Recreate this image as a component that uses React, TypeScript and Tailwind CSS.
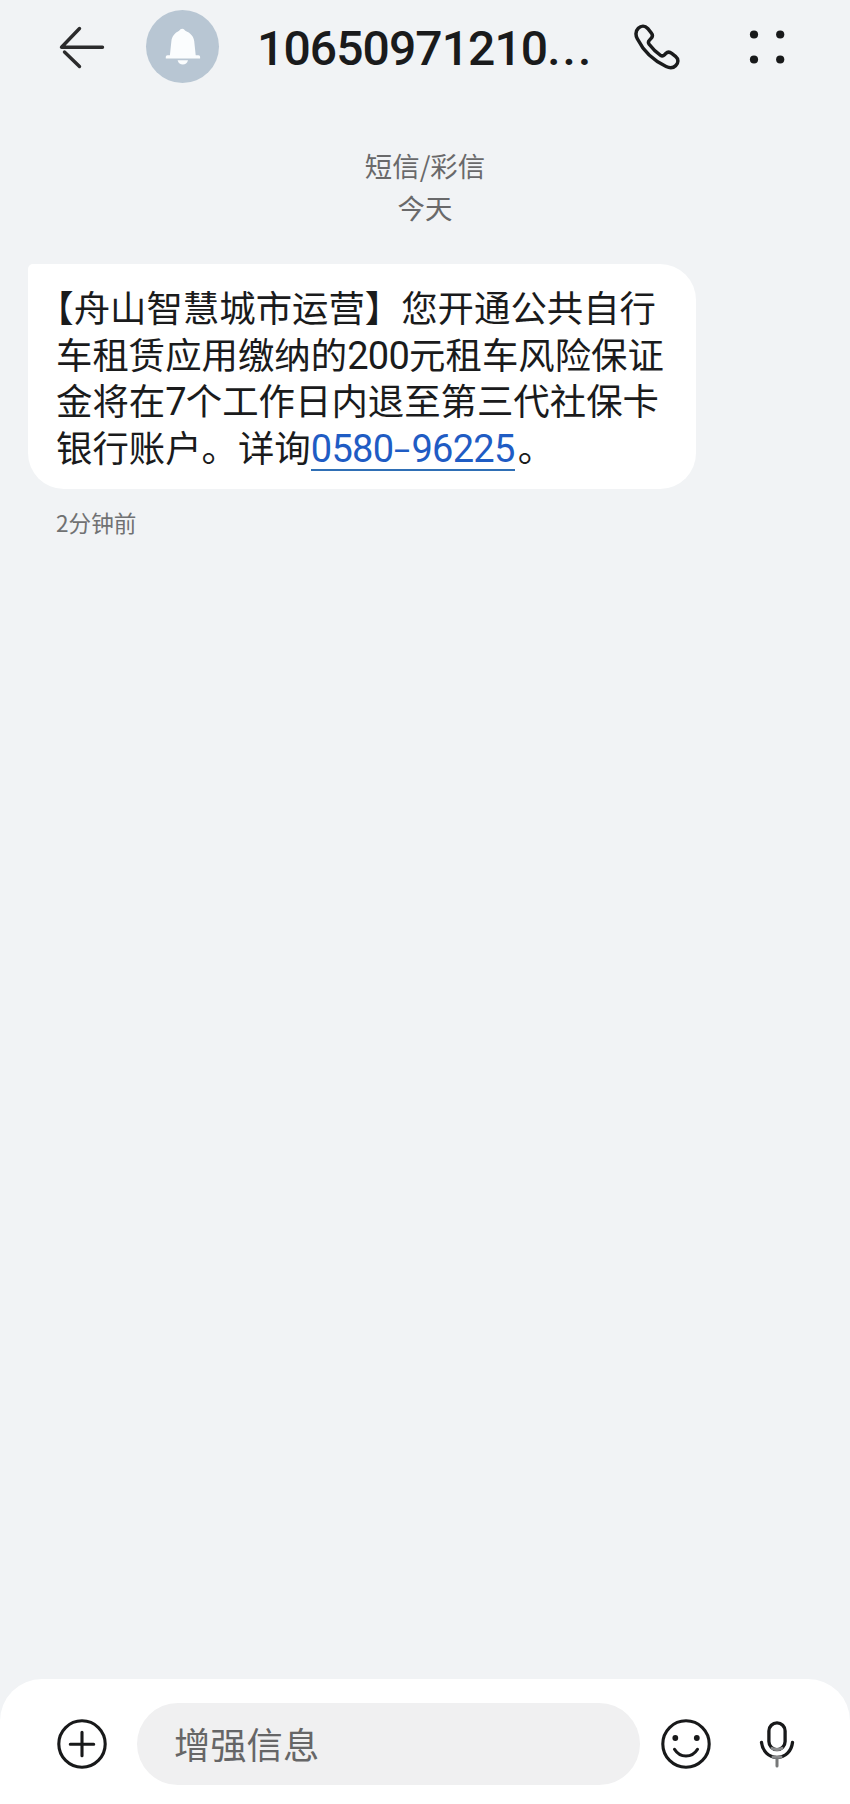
import type { ReactNode } from "react";

function BackIcon() {
  return (
    <svg className="h-11 w-12" viewBox="0 0 48 44" fill="none" stroke="#2b2b2c" strokeWidth="3.4" strokeLinecap="round">
      <path d="M21.500 3.500 3.500 22.200H44.500" strokeLinejoin="round" />
      <path d="M6.500 27 21.500 41.500" />
    </svg>
  );
}

function BellIcon() {
  return (
    <svg className="h-[38px] w-9" viewBox="0 0 36 38" fill="#fbfdfe">
      <path d="M17.200 0.800c1.400 0 2.100 1 3.100 1.900 5.200 2.200 8.300 5.500 8.900 10.300l1.500 14.200h2.700c1.400 0 1.900 .9 1.700 3.400H.8c-.2-2.500.3-3.400 1.700-3.400h2.400l1.500-14.200C7 8.200 9.800 4.900 14.100 2.700c1-.9 1.700-1.900 3.100-1.900Z" />
      <path d="M12.600 32.300h10.400c-.8 2.900-2.700 4.200-5.200 4.200s-4.400-1.300-5.200-4.200Z" />
    </svg>
  );
}

function PhoneIcon() {
  return (
    <svg className="size-[48px]" viewBox="0 0 50 50" fill="none" stroke="#1a1b1c" strokeWidth="3.600" strokeLinejoin="round">
      <path d="M5.500 5.500C8.500 2.400 12.500 2.600 15.300 5.700L19 10.200C21 12.700 20.600 14.500 18.500 16.500L17.400 17.600C15.800 19.200 15.500 20.400 16.800 22.100C20.500 27 24 30.400 28.700 33.700C30.400 34.800 31.500 34.400 32.900 33L34.100 31.800C36 29.900 38 29.800 40.300 31.600L44.300 34.800C47.600 37.500 47.600 41.500 44.500 44.400C42.100 46.700 38.500 47.200 34.500 45.300C20.500 38.900 11 29.500 4.500 16.500C2.400 12.200 2.700 8.300 5.500 5.500Z" />
    </svg>
  );
}

function MoreIcon() {
  return (
    <svg className="h-[34px] w-9" viewBox="0 0 36 34" fill="#18191a">
      <circle cx="5" cy="4.500" r="4.100" />
      <circle cx="31.200" cy="4.500" r="4.100" />
      <circle cx="5" cy="29.500" r="4.100" />
      <circle cx="31.200" cy="29.500" r="4.100" />
    </svg>
  );
}

function PlusIcon() {
  return (
    <svg className="size-[50px]" viewBox="0 0 50 50" fill="none" stroke="#18191a" strokeWidth="3.100" strokeLinecap="round">
      <circle cx="25" cy="25" r="23.200" />
      <path d="M25 13.300v23.400M13.300 25.200h23.400" />
    </svg>
  );
}

function SmileIcon() {
  return (
    <svg className="size-[50px]" viewBox="0 0 50 50" fill="none" stroke="#18191a" strokeWidth="3.100" strokeLinecap="round">
      <circle cx="25" cy="25" r="23.200" />
      <path d="M13.500 30.300c5.500 9 17.500 9 23 0" />
      <circle cx="14.300" cy="19" r="2.900" fill="#18191a" stroke="none" />
      <circle cx="35.800" cy="19" r="2.900" fill="#18191a" stroke="none" />
    </svg>
  );
}

function MicIcon() {
  return (
    <svg className="h-12 w-9" viewBox="0 0 36 48" fill="none" stroke="#18191a" strokeWidth="3.300" strokeLinecap="round">
      <path d="M9.900 21.500V11a8.100 8.100 0 0 1 16.200 0v10.500a8.100 8.100 0 0 1-16.200 0Z" />
      <path d="M2.500 22.500C3.500 31 9.500 37.300 18 37.300S32.500 31 33.500 22.500" />
      <path d="M13 28.200Q18 31 23 28.200M14 37Q18 37.800 22 37" stroke="#8a8b8c" strokeWidth="3" />
      <path d="M18 39v7" stroke="#777879" strokeWidth="3" />
    </svg>
  );
}

function Digits({ children }: { children: ReactNode }) {
  return <span className="font-[Roboto,sans-serif] text-[38px] tracking-[-0.7px]">{children}</span>;
}

export default function App() {
  return (
    <div className="flex h-[1804px] w-[850px] flex-col overflow-hidden bg-[#f1f3f5] font-['Noto_Sans_CJK_SC',sans-serif] text-[#1a1b1c]">
      <header className="flex h-[94px] shrink-0 items-center pl-[58px]">
        <BackIcon />
        <div className="mb-px ml-10 flex size-[73px] items-center justify-center rounded-full bg-[#b8c6d3]">
          <BellIcon />
        </div>
        <h1 className="mt-[3px] ml-[38px] w-[376px] whitespace-nowrap font-[Roboto,sans-serif] text-[48px] leading-[60px] font-medium tracking-[-0.9px]">
          10650971210<span className="tracking-[2px]">...</span>
        </h1>
        <PhoneIcon />
        <div className="mb-px ml-[68px]">
          <MoreIcon />
        </div>
      </header>

      <main className="flex flex-1 flex-col">
        <div className="mt-[50px] flex flex-col items-center text-[27.4px] leading-[42px] text-[#69696a]">
          <p>短信/彩信</p>
          <p>今天</p>
        </div>

        <div className="mt-9 ml-7 h-[225px] w-[668px] rounded-[36px] rounded-tl-[5px] bg-white pt-[19px] pl-7 text-[36.4px] whitespace-nowrap">
          <p className="-ml-[18.7px] h-[46.7px] leading-[46.7px]">【舟山智慧城市运营】您开通公共自行</p>
          <p className="h-[46.7px] leading-[46.7px]">车租赁应用缴纳的<Digits>200</Digits>元租车风险保证</p>
          <p className="h-[46.7px] leading-[46.7px]">金将在<Digits>7</Digits>个工作日内退至第三代社保卡</p>
          <p className="flex h-[46.7px] leading-[46.7px]">
            <span>银行账户。详询</span>
            <a className="flex h-12 border-b-2 border-[#2f6fb5] pt-[3px] text-[#1f5cc4]">
              <Digits>0580</Digits>
              <span className="-mt-1 inline-block w-[18px] origin-center scale-x-150 text-center">-</span>
              <Digits>96225</Digits>
            </a>
            <span className="ml-[3px]">。</span>
          </p>
        </div>
        <p className="mt-[18px] ml-14 text-[22.6px] leading-8 text-[#707172]">2分钟前</p>
      </main>

      <footer className="flex h-[125px] shrink-0 items-start rounded-t-[42px] bg-white pt-6 pl-[57px]">
        <div className="flex h-[82px] items-center">
          <PlusIcon />
          <div className="ml-[30px] flex h-[82px] w-[503px] items-center rounded-full bg-[#f0f0f1] pb-[3px] pl-[37px] text-[36.3px] leading-[46px] text-[#666667]">
            增强信息
          </div>
          <div className="ml-[21px]">
            <SmileIcon />
          </div>
          <div className="ml-12">
            <MicIcon />
          </div>
        </div>
      </footer>
    </div>
  );
}
